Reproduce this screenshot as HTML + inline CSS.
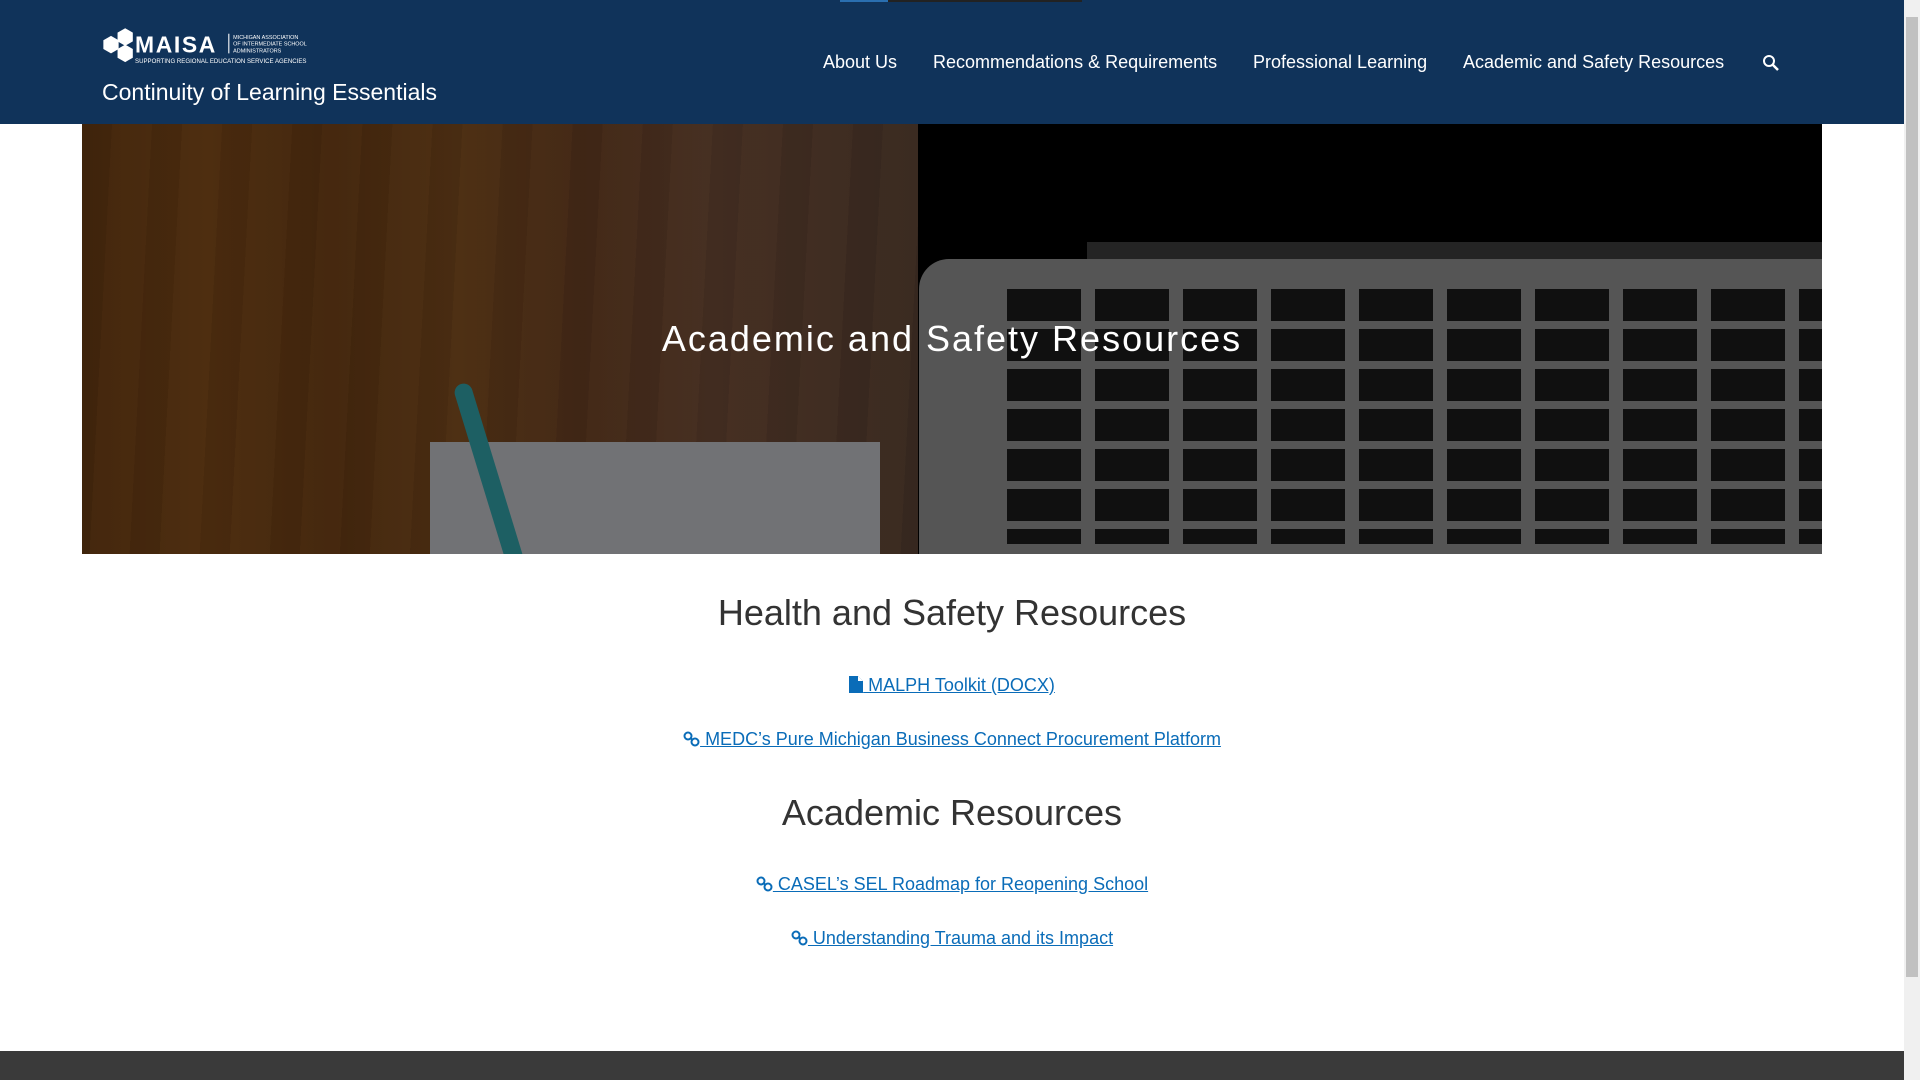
<!DOCTYPE html>
<html><head><meta charset="utf-8"><style>
*{margin:0;padding:0;box-sizing:border-box}
body{width:1920px;height:1080px;overflow:hidden;background:#fff;font-family:"Liberation Sans",Arial,sans-serif;position:relative}
.hdr{position:absolute;left:0;top:0;width:1904px;height:124px;background:#10335a}
.topbar{position:absolute;left:840px;top:0;width:242px;height:2px;background:#222}
.topbar i{position:absolute;left:0;top:0;width:48px;height:2px;background:#2a6fb0}
.title{position:absolute;left:102px;top:79px;color:#fff;font-size:23px}
.nav{position:absolute;top:52px;color:#fff;font-size:18px;white-space:nowrap}
.scroll{position:absolute;left:1904px;top:0;width:16px;height:1080px;background:#f0f0f0}
.scroll i{position:absolute;left:2px;top:17px;width:12px;height:960px;background:#c1c1c1}
.hero{position:absolute;left:82px;top:124px;width:1740px;height:430px;overflow:hidden;background:#000}
.wood{position:absolute;left:0;top:0;width:836px;height:430px;background:linear-gradient(90deg,#6a3c14 0%,#7a4718 15%,#6c3e16 30%,#7a4a1e 45%,#6a4024 60%,#6e4a36 75%,#5a4234 100%)}
.wood2{position:absolute;inset:0;background:repeating-linear-gradient(93deg,rgba(0,0,0,.04) 0 30px,rgba(255,190,110,.03) 30px 70px)}
.lap{position:absolute;left:837px;top:135px;width:920px;height:320px;background:#8a8a8a;border-radius:30px 0 0 0}
.hinge{position:absolute;left:1005px;top:118px;width:760px;height:32px;background:#3a3a3a}
.kb{position:absolute;left:925px;top:165px;width:830px;height:255px;background:repeating-linear-gradient(90deg,#1a1a1a 0 74px,#8a8a8a 74px 88px);}
.kbh{position:absolute;left:925px;top:165px;width:830px;height:255px;background:repeating-linear-gradient(180deg,transparent 0 32px,#8a8a8a 32px 40px)}
.pad{position:absolute;left:348px;top:318px;width:450px;height:130px;background:#b6b8bd}
.pen{position:absolute;left:370px;top:260px;width:18px;height:200px;background:#2f9aa0;transform:rotate(-17deg);transform-origin:top;border-radius:9px 9px 0 0}
.ov{position:absolute;inset:0;background:rgba(0,0,0,.38)}
.htitle{position:absolute;left:0;width:100%;top:194px;text-align:center;color:#fff;font-size:36px;letter-spacing:2px}
h2{position:absolute;left:82px;width:1740px;text-align:center;font-weight:normal;color:#333;font-size:36px}
.lk{position:absolute;left:82px;width:1740px;text-align:center;font-size:18px;color:#0a6cb8;text-decoration:underline}
.foot{position:absolute;left:0;top:1051px;width:1904px;height:29px;background:#3a3a3a}
</style></head><body>
<div class="hdr">
<div class="topbar"><i></i></div>
<svg style="position:absolute;left:99px;top:25px" width="240" height="48" viewBox="0 0 220 44">
<polygon points="24,3 31,7 31,15 24,19 17,15 17,7" fill="#fff"/>
<polygon points="11,10 18,14 18,22 11,26 4,22 4,14" fill="#fff"/>
<polygon points="24,18 31,22 31,30 24,34 17,30 17,22" fill="#fff"/>
<text x="33" y="25" fill="#fff" font-family="Liberation Sans" font-size="21" font-weight="bold" letter-spacing="1.5">MAISA</text>
<line x1="119" y1="8" x2="119" y2="26" stroke="#fff" stroke-width="1"/>
<text x="123" y="13" fill="#fff" font-size="5" font-family="Liberation Sans">MICHIGAN ASSOCIATION</text>
<text x="123" y="19" fill="#fff" font-size="5" font-family="Liberation Sans">OF INTERMEDIATE SCHOOL</text>
<text x="123" y="25" fill="#fff" font-size="5" font-family="Liberation Sans">ADMINISTRATORS</text>
<text x="33" y="35" fill="#fff" font-size="5.6" font-family="Liberation Sans">SUPPORTING REGIONAL EDUCATION SERVICE AGENCIES</text>
</svg>
<div class="title">Continuity of Learning Essentials</div>
<div class="nav" style="left:823px">About Us</div>
<div class="nav" style="left:933px">Recommendations &amp; Requirements</div>
<div class="nav" style="left:1253px">Professional Learning</div>
<div class="nav" style="left:1463px">Academic and Safety Resources</div>
<svg style="position:absolute;left:1762px;top:54px" width="18" height="18" viewBox="0 0 18 18"><circle cx="7" cy="7" r="5" fill="none" stroke="#fff" stroke-width="2"/><line x1="10.5" y1="10.5" x2="16" y2="16" stroke="#fff" stroke-width="2.5"/></svg>
</div>
<div class="hero">
<div class="wood"><div class="wood2"></div></div>
<div class="hinge"></div>
<div class="lap"></div>
<div class="kb"></div><div class="kbh"></div>
<div class="pad"></div>
<div class="pen"></div>
<div class="ov"></div>
<div class="htitle">Academic and Safety Resources</div>
</div>
<h2 style="top:592px">Health and Safety Resources</h2>
<div class="lk" style="top:675px"><svg width="14" height="17" viewBox="0 0 14 17" style="vertical-align:-2px"><path d="M0 0H9L14 5V17H0Z" fill="#0a6cb8"/><path d="M9 0V5H14" fill="#fff"/></svg> MALPH Toolkit (DOCX)</div>
<div class="lk" style="top:729px"><svg width="17" height="16" viewBox="0 0 17 16" style="vertical-align:-2px"><circle cx="5" cy="5" r="3.5" fill="none" stroke="#0a6cb8" stroke-width="2"/><circle cx="12" cy="11" r="3.5" fill="none" stroke="#0a6cb8" stroke-width="2"/><line x1="7" y1="7" x2="10" y2="9" stroke="#0a6cb8" stroke-width="2"/></svg> MEDC’s Pure Michigan Business Connect Procurement Platform</div>
<h2 style="top:792px">Academic Resources</h2>
<div class="lk" style="top:874px"><svg width="17" height="16" viewBox="0 0 17 16" style="vertical-align:-2px"><circle cx="5" cy="5" r="3.5" fill="none" stroke="#0a6cb8" stroke-width="2"/><circle cx="12" cy="11" r="3.5" fill="none" stroke="#0a6cb8" stroke-width="2"/><line x1="7" y1="7" x2="10" y2="9" stroke="#0a6cb8" stroke-width="2"/></svg> CASEL’s SEL Roadmap for Reopening School</div>
<div class="lk" style="top:928px"><svg width="17" height="16" viewBox="0 0 17 16" style="vertical-align:-2px"><circle cx="5" cy="5" r="3.5" fill="none" stroke="#0a6cb8" stroke-width="2"/><circle cx="12" cy="11" r="3.5" fill="none" stroke="#0a6cb8" stroke-width="2"/><line x1="7" y1="7" x2="10" y2="9" stroke="#0a6cb8" stroke-width="2"/></svg> Understanding Trauma and its Impact</div>
<div class="foot"></div>
<div class="scroll"><i></i></div>
</body></html>
